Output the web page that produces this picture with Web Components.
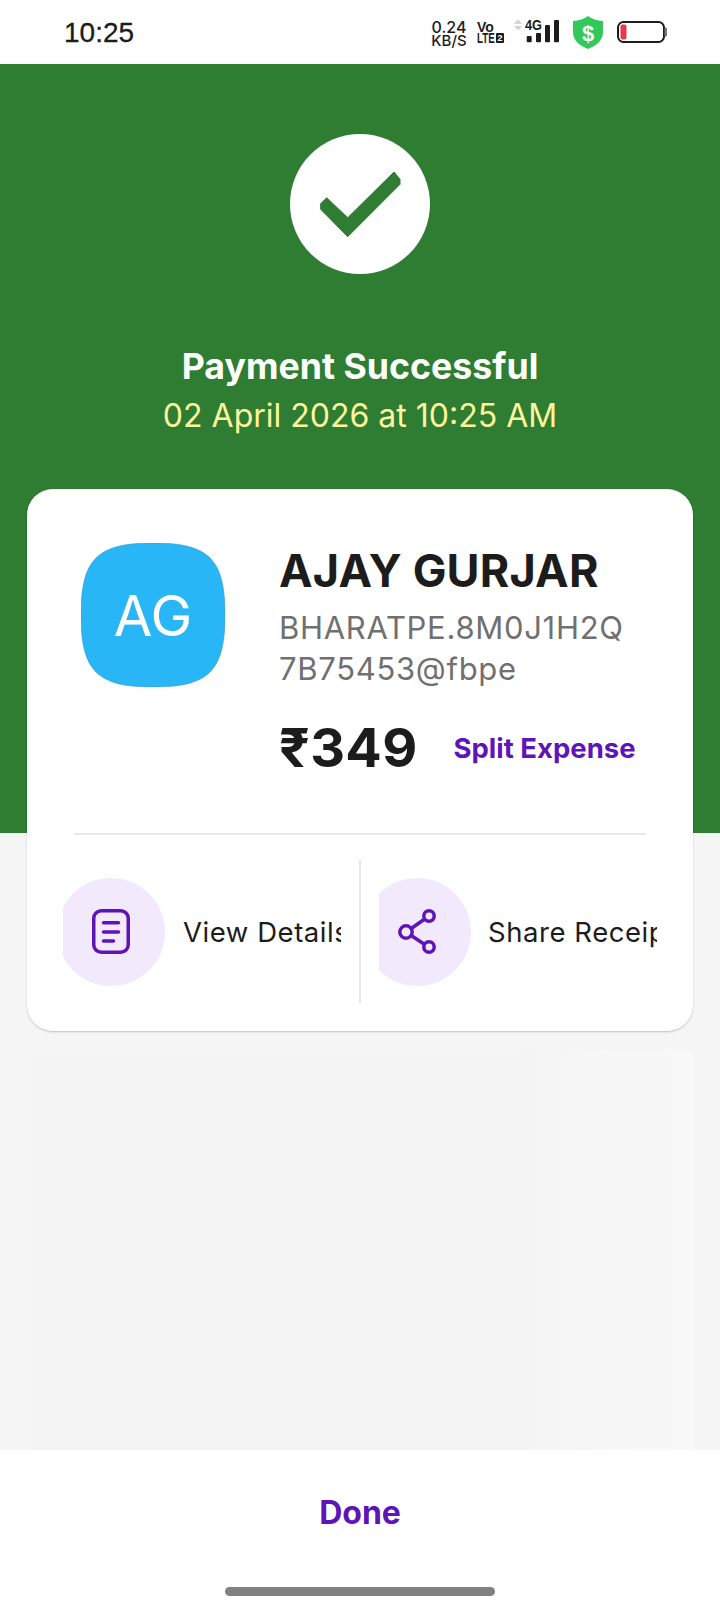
<!DOCTYPE html>
<html>
<head>
<meta charset="utf-8">
<title>Payment Successful</title>
<style>
	html, body { margin: 0; padding: 0; background: #f5f5f5; }
	body { width: 720px; height: 1612px; overflow: hidden; font-family: Inter, "Noto Sans", sans-serif; }
</style>
</head>
<body>
<payment-screen>
	<status-bar slot="status"></status-bar>
	<success-hero slot="hero" title-text="Payment Successful" date-text="02 April 2026 at 10:25 AM"></success-hero>
	<receipt-card slot="card" initials="AG" name="AJAY GURJAR" upi="BHARATPE.8M0J1H2Q 7B75453@fbpe" amount="₹349"></receipt-card>
	<done-bar slot="footer"></done-bar>
</payment-screen>

<script>
class PaymentScreen extends HTMLElement {
	constructor() {
		super();
		this.attachShadow({ mode: "open" });
		this.shadowRoot.innerHTML = `<style>
			:host { display: flex; flex-direction: column; width: 720px; height: 1612px; }
			main { flex: 1; min-height: 0; display: flex; flex-direction: column; gap: 19px; padding: 0 27px; margin-top: -344px; }
			.panel {
				flex: 1;
				background: linear-gradient(90deg, #f4f4f4 0%, #f4f4f4 74%, #f6f6f6 84%, #f8f8f8 100%);
			}
		</style>
		<slot name="status"></slot>
		<slot name="hero"></slot>
		<main>
			<slot name="card"></slot>
			<div class="panel"></div>
		</main>
		<slot name="footer"></slot>`;
	}
}
customElements.define("payment-screen", PaymentScreen);

class StatusBar extends HTMLElement {
	constructor() {
		super();
		this.attachShadow({ mode: "open" });
		this.shadowRoot.innerHTML = `<style>
			:host { display: flex; align-items: center; justify-content: space-between; height: 64px; background: #fff; padding: 0 53px 0 64px; box-sizing: border-box; color: #1c1c1c; font-family: "Liberation Sans", sans-serif; }
			.time { font-size: 28px; line-height: 64px; margin-top: 1px; -webkit-text-stroke: .3px #1c1c1c; }
			.icons { display: flex; align-items: center; }
			.speed { display: flex; flex-direction: column; align-items: center; font-family: Inter, sans-serif; width: 38px; margin: 3px 9px 0 0; }
			.speed b { font-weight: 500; font-size: 16px; line-height: 13px; }
			.speed i { font-style: normal; font-weight: 500; font-size: 15px; line-height: 13px; }
			.volte { display: flex; flex-direction: column; gap: 1px; width: 27px; margin-right: 10px; font: 700 14px/10px "Liberation Sans", sans-serif; }
			.volte .lte { display: flex; align-items: center; gap: 1px; height: 10px; }
			.volte .lte span { display: inline-block; width: 18px; transform: scaleX(.7); transform-origin: left; white-space: nowrap; }
			.volte em { font-style: normal; background: #1c1c1c; color: #fff; font-size: 9px; line-height: 10px; width: 8px; text-align: center; border-radius: 1px; }
			svg { display: block; }
			.net { position: relative; width: 45px; height: 26px; margin-right: 14px; }
			.net small { position: absolute; left: 11px; top: 0; font: 700 15px/11px "Liberation Sans", sans-serif; transform: scaleX(.85); transform-origin: left; }
			.shield { margin-right: 14px; }
		</style>
		<span class="time">10:25</span>
		<div class="icons">
			<div class="speed"><b>0.24</b><i>KB/S</i></div>
			<div class="volte"><div>Vo</div><div class="lte"><span>LTE</span><em>2</em></div></div>
			<div class="net">
				<svg width="45" height="26" viewBox="0 0 45 26">
					<path d="M0 5l4-5 4 5zM0 7l4 4.500 4-4.500z" fill="#d4d4d4"/>
					<rect x="12.700" y="17" width="5" height="6.300" rx="1" fill="#1c1c1c"/>
					<rect x="22" y="14" width="5" height="9.300" rx="1" fill="#1c1c1c"/>
					<rect x="31" y="6" width="5" height="17.300" rx="1" fill="#1c1c1c"/>
					<rect x="40" y="1" width="5" height="22.300" rx="1" fill="#1c1c1c"/>
				</svg>
				<small>4G</small>
			</div>
			<svg class="shield" width="30" height="33" viewBox="0 0 30 33">
				<path d="M15 0c4 3 9 4.500 15 5v11c0 8-6 13.500-15 17C6 29.500 0 24 0 16V5c6-.500 11-2 15-5z" fill="#34c759"/>
				<text x="15" y="24.500" text-anchor="middle" font-family="Liberation Sans" font-weight="700" font-size="22" fill="#fff">$</text>
			</svg>
			<svg width="50" height="22" viewBox="0 0 50 22">
				<rect x="1" y="1" width="46" height="20" rx="5.500" fill="#fff" stroke="#1c1c1c" stroke-width="2"/>
				<rect x="3.500" y="3.500" width="6" height="15" rx="2" fill="#e53950"/>
				<rect x="47.500" y="6.500" width="2.500" height="9" rx="1" fill="#777"/>
			</svg>
		</div>`;
	}
}
customElements.define("status-bar", StatusBar);

class SuccessHero extends HTMLElement {
	constructor() {
		super();
		this.attachShadow({ mode: "open" });
		const title = this.getAttribute("title-text") ?? "";
		const date = this.getAttribute("date-text") ?? "";
		this.shadowRoot.innerHTML = `<style>
			:host { display: flex; flex-direction: column; align-items: center; height: 769px; background: #2e7d32; padding-top: 70px; box-sizing: border-box; }
			svg { display: block; }
			h1 { margin: 70px 0 0; font: 700 35.700px/44px Inter, sans-serif; color: #fff; }
			p { margin: 6px 0 0; font: 400 32px/44px Inter, sans-serif; color: #fff59d; }
		</style>
		<svg width="140" height="140" viewBox="0 0 140 140">
			<circle cx="70" cy="70" r="70" fill="#fff"/>
			<path d="M36.700 63.700L57.700 83.700 104 38 110 45.300V50.300L57.700 102.700 30.700 75.300V69.700Z" fill="#2e7d32" stroke="#2e7d32" stroke-width="1" stroke-linejoin="round"/>
		</svg>
		<h1>${title}</h1>
		<p>${date}</p>`;
	}
}
customElements.define("success-hero", SuccessHero);

class ActionTile extends HTMLElement {
	constructor() {
		super();
		this.attachShadow({ mode: "open" });
		this.shadowRoot.innerHTML = `<style>
			:host { display: flex; align-items: center; overflow: hidden; height: 108px; color: #1c1c1c; }
			.circle { flex: none; width: 108px; height: 108px; margin-left: var(--bleed, -6px); border-radius: 50%; background: #f3e9fc; display: flex; align-items: center; justify-content: center; color: #5f14b8; }
			span { flex: none; margin-left: var(--text-gap, 18px); font: 400 27.500px/40px Inter, sans-serif; letter-spacing: .55px; white-space: nowrap; }
		</style>
		<div class="circle"><slot name="icon"></slot></div>
		<span><slot></slot></span>`;
	}
}
customElements.define("action-tile", ActionTile);

class ReceiptCard extends HTMLElement {
	constructor() {
		super();
		this.attachShadow({ mode: "open" });
		const attr = (n) => this.getAttribute(n) ?? "";
		this.shadowRoot.innerHTML = `<style>
			:host { display: block; background: #fff; border-radius: 26px; height: 542px; box-shadow: 0 1px 2px rgba(0,0,0,.22); color: #1c1c1c; position: relative; }
			.top { display: flex; height: 344px; padding: 54px 0 0 54px; box-sizing: border-box; }
			.avatar { flex: none; width: 144px; height: 144px; }
			.avatar svg { display: block; }
			.info { margin-left: 54px; width: 350px; }
			h2 { margin: 0; font: 700 45px/56px Inter, sans-serif; letter-spacing: .2px; white-space: nowrap; }
			.upi { margin-top: 8px; font: 400 31px/41px Inter, sans-serif; color: #707070; letter-spacing: .7px; word-break: break-all; }
			.row { display: flex; align-items: center; margin-top: 25px; }
			.amount { font: 700 54px/68px Inter, sans-serif; letter-spacing: .3px; }
			a { margin-left: 36px; font: 700 27.500px/40px Inter, sans-serif; color: #5f14b8; white-space: nowrap; }
			hr { border: 0; height: 2px; background: #e8e8e8; margin: 0 47px; }
			.actions { display: flex; align-items: center; height: 143px; margin-top: 25px; padding-left: 36px; }
			action-tile { width: 278px; }
			.sep { flex: none; width: 2px; height: 143px; background: #e8e8e8; margin: 0 18px; }
			action-tile svg { display: block; }
		</style>
		<div class="top">
			<div class="avatar">
				<svg width="144" height="144" viewBox="0 0 144 144">
					<path d="M72 0C128 0 144 16 144 72S128 144 72 144 0 128 0 72 16 0 72 0Z" fill="#29b6f6" stroke="#1f8fc4" stroke-width=".5"/>
					<text x="72" y="93" text-anchor="middle" font-family="Inter" font-size="56" fill="#fff">${attr("initials")}</text>
				</svg>
			</div>
			<div class="info">
				<h2>${attr("name")}</h2>
				<div class="upi">${attr("upi").replace(" ", "<br>")}</div>
				<div class="row"><span class="amount">${attr("amount")}</span><a>Split Expense</a></div>
			</div>
		</div>
		<hr>
		<div class="actions">
			<action-tile>
				<svg slot="icon" width="38" height="45" viewBox="0 0 38 45" fill="none" stroke="currentColor" stroke-width="3.500" stroke-linecap="round">
					<rect x="1.750" y="1.750" width="34.500" height="41.500" rx="7.500"/>
					<path d="M11.500 13.700h15M11.500 23h15M11.500 32h10"/>
				</svg>
				View Details
			</action-tile>
			<div class="sep"></div>
			<action-tile style="--bleed: -16px; --text-gap: 17px">
				<svg slot="icon" width="38" height="45" viewBox="0 0 38 45" fill="none" stroke="currentColor" stroke-width="3.500">
					<circle cx="8" cy="23" r="6.200"/><circle cx="31" cy="7" r="5.200"/><circle cx="31" cy="38" r="5.200"/>
					<path d="M13.200 19.500l13.500-9.500M13.200 26.500l13.500 9"/>
				</svg>
				Share Receipt
			</action-tile>
		</div>`;
	}
}
customElements.define("receipt-card", ReceiptCard);

class DoneBar extends HTMLElement {
	constructor() {
		super();
		this.attachShadow({ mode: "open" });
		this.shadowRoot.innerHTML = `<style>
			:host { display: flex; flex-direction: column; align-items: center; height: 162px; background: #fff; flex: none; }
			button { border: 0; background: none; padding: 0; margin-top: 43px; font: 700 32px/40px Inter, sans-serif; color: #5f14b8; }
			.home { margin-top: 54px; width: 270px; height: 9px; border-radius: 5px; background: #808080; }
		</style>
		<button>Done</button>
		<div class="home"></div>`;
	}
}
customElements.define("done-bar", DoneBar);
</script>
</body>
</html>
